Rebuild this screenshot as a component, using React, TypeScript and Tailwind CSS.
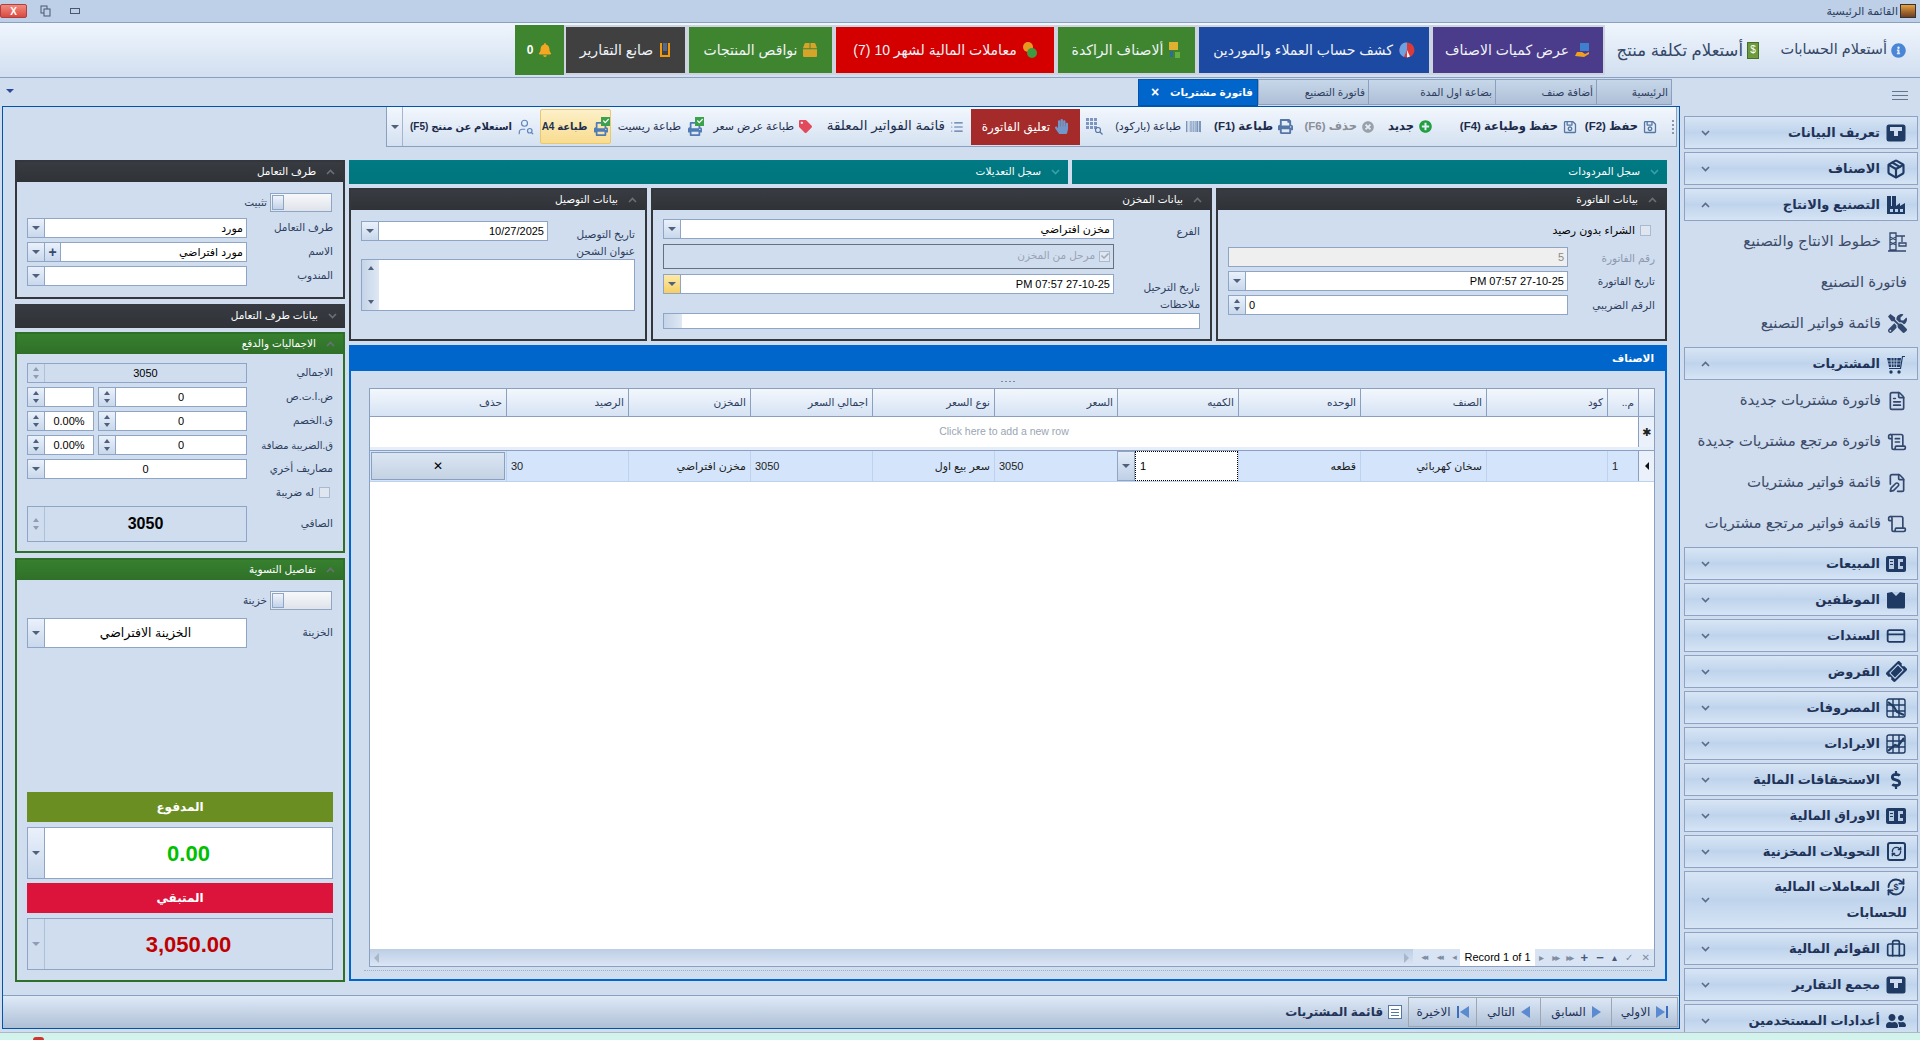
import React from 'react';
import {
  FaBell, FaBox, FaDollarSign, FaHandPaper, FaInfoCircle, FaPlusCircle, FaPrint,
  FaRegSave, FaTag, FaTimesCircle, FaTools, FaUserFriends, FaTicketAlt, FaBarcode, FaCheck,
} from 'react-icons/fa';
import { Package, CreditCard, FileText, ScrollText, Scroll, FileEdit, Briefcase, RefreshCw, UserSearch, List } from 'lucide-react';

function Tri({ up, cls = 'border-t-[#4f5f7c]' }: { up?: boolean; cls?: string }) {
  if (up) return <span className="w-0 h-0 border-x-[3px] border-x-transparent border-b-[4px] border-b-[#4f5f7c]" />;
  return <span className={`w-0 h-0 border-x-[4px] border-x-transparent border-t-[4px] ${cls}`} />;
}

function Chevron({ up, cls = 'text-[#5a6a88]' }: { up?: boolean; cls?: string }) {
  return (
    <svg width="9" height="6" viewBox="0 0 9 6" className={cls}>
      <path d={up ? 'M1 5l3.5-3.5L8 5' : 'M1 1l3.5 3.5L8 1'} fill="none" stroke="currentColor" strokeWidth="1.6" />
    </svg>
  );
}

function SideBtn({ kind, yellow, faded }: { kind: 'down' | 'spin'; yellow?: boolean; faded?: boolean }) {
  const bg = yellow ? 'from-[#fdeaa8] to-[#f5cf63]' : 'from-[#eaf1fb] to-[#c9d8ec]';
  return (
    <div className={`w-[17px] shrink-0 flex flex-col items-center justify-center gap-[4px] border-r border-[#8fa5c6] bg-linear-to-b ${faded ? 'from-[#d0ddee] to-[#d0ddee] opacity-50' : bg}`}>
      {kind === 'down' ? <Tri /> : (<><Tri up /><span className="rotate-180 flex"><Tri up /></span></>)}
    </div>
  );
}

function Field({ value = '', btn, cls, align = 'text-right', text = 'text-[11px] text-black', bg = 'bg-white', yellow, faded, plus }: {
  value?: string; btn?: 'down' | 'spin'; cls: string; align?: string; text?: string; bg?: string; yellow?: boolean; faded?: boolean; plus?: boolean;
}) {
  return (
    <div dir="ltr" className={`flex border border-[#8fa5c6] shrink-0 ${cls}`}>
      {btn && <SideBtn kind={btn} yellow={yellow} faded={faded} />}
      {plus && <div className="w-[16px] shrink-0 flex items-center justify-center border-r border-[#8fa5c6] bg-linear-to-b from-[#eaf1fb] to-[#c9d8ec] text-[14px] font-bold leading-none text-[#344a70]">+</div>}
      <div dir="rtl" className={`flex-1 min-w-0 px-[3px] flex items-center ${bg} ${text}`}>
        <span className={`w-full whitespace-nowrap ${align}`}>{value}</span>
      </div>
    </div>
  );
}

function Label({ children, cls = '', tone = 'text-[#2d3e5e]', size = 'text-[10.5px]' }: { children: React.ReactNode; cls?: string; tone?: string; size?: string }) {
  return <span className={`whitespace-nowrap ${size} ${tone} ${cls}`}>{children}</span>;
}

function Toggle() {
  return (
    <div dir="ltr" className="w-[62px] h-[19px] border border-[#8fa5c6] bg-linear-to-b from-[#f7f8fa] to-[#dfe3ea] p-[1px] flex">
      <div className="w-[12px] h-full border border-[#8fa5c6] bg-linear-to-b from-[#f0f5fc] to-[#c3d2e8]" />
    </div>
  );
}

function Check({ checked }: { checked?: boolean }) {
  return (
    <span className="w-[11px] h-[11px] border border-[#a9b9d0] bg-[#dfe6f0] flex items-center justify-center shrink-0">
      {checked && <FaCheck className="text-[#a0aabb] text-[8px]" />}
    </span>
  );
}

function Group({ title, cls, head, border, up = true, chev = 'text-[#6a7078]', h = 'h-[20px]', children }: {
  title: string; cls: string; head: string; border: string; up?: boolean; chev?: string; h?: string; children?: React.ReactNode;
}) {
  return (
    <div dir="rtl" className={`flex flex-col shrink-0 ${children ? `border-2 ${border}` : ''} ${cls}`}>
      <div className={`${h} shrink-0 flex items-center pr-[8px] gap-[10px] text-white text-[10.5px] ${head}`}>
        <Chevron up={up} cls={chev} />
        <span className="whitespace-nowrap">{title}</span>
      </div>
      {children}
    </div>
  );
}

const DARK = 'bg-linear-to-b from-[#383c42] to-[#2f3338]';
const GREEN = 'bg-linear-to-b from-[#37802f] to-[#2f7029]';
const TEAL = 'bg-linear-to-b from-[#007a84] to-[#00757c]';

/* small drawn icons */
function TBox() {
  return (
    <svg viewBox="0 0 20 18" className="w-[20px] h-[18px]">
      <rect x="0.5" y="0.5" width="19" height="17" rx="2.5" fill="#1f3a63" />
      <path d="M4 3h12v4h-4v5H8V7H4z" fill="#cfdcf0" />
    </svg>
  );
}
function BookS() {
  return (
    <svg viewBox="0 0 20 16" className="w-[20px] h-[16px]">
      <rect width="20" height="16" rx="2" fill="#1f3a63" />
      <path d="M3 3h5v10H3zM12 3h5v3h-3v4h3v3h-5z" fill="#b9cbe4" />
      <rect x="4" y="5" width="3" height="1" fill="#1f3a63" /><rect x="4" y="8" width="3" height="1" fill="#1f3a63" />
    </svg>
  );
}
function Shirt() {
  return (
    <svg viewBox="0 0 20 18" className="w-[20px] h-[18px]">
      <path d="M1 2l5-1 4 4 4-4 5 1v14a1.5 1.5 0 0 1-1.5 1.5h-15A1.5 1.5 0 0 1 1 16z" fill="#1f3a63" />
      <path d="M7 1h6l-3 3z" fill="#b9cbe4" />
    </svg>
  );
}
function Sheet({ up }: { up?: boolean }) {
  return (
    <svg viewBox="0 0 20 20" className="w-[20px] h-[20px]" fill="none" stroke="#1f3a63" strokeWidth="1.4">
      <rect x="1" y="1" width="18" height="18" rx="2" />
      <path d="M1 7h18M1 13h18M7 1v18M13 1v18" />
      <path d={up ? 'M2 17L9 11l3 1 6-8' : 'M2 4l6 5 3 5 7 3'} strokeWidth="2.2" />
    </svg>
  );
}
function SwapBox() {
  return (
    <div className="w-[19px] h-[19px] border-2 border-[#1f3a63] rounded-[3px] flex items-center justify-center">
      <RefreshCw size={11} strokeWidth={3} className="text-[#1f3a63]" />
    </div>
  );
}
function Crane() {
  return (
    <svg viewBox="0 0 20 20" className="w-[20px] h-[20px]" fill="none" stroke="#33486e" strokeWidth="1.3">
      <path d="M3 1h6v17H3zM3 5l6 3M9 5L3 8M3 10l6 3M9 10l-6 3M9 4h9M15 4v6M12 11h7v3h-7zM1 19h18" />
    </svg>
  );
}
function Factory() {
  return (
    <svg viewBox="0 0 20 20" className="w-[20px] h-[20px]">
      <path d="M1 19V1h4v10h1V1h4v10l4-3v3l5-3v11z" fill="#1f3a63" />
      <rect x="4" y="14" width="3" height="3" fill="#bcd1ea" /><rect x="9" y="14" width="3" height="3" fill="#bcd1ea" /><rect x="14" y="14" width="3" height="3" fill="#bcd1ea" />
    </svg>
  );
}
function Cart() {
  return (
    <svg viewBox="0 0 20 20" className="w-[20px] h-[20px]">
      <path d="M1 4h14l-1 9H3z" fill="#1f3a63" />
      <path d="M1 7h14M1.5 10h13M5 4l.5 9M8 4v9M11 4l-.5 9" stroke="#bcd1ea" strokeWidth="0.8" />
      <path d="M14 14H3v1h12l2-12h2V2h-3z" fill="#1f3a63" />
      <circle cx="5" cy="18" r="1.7" fill="#1f3a63" /><circle cx="13" cy="18" r="1.7" fill="#1f3a63" />
    </svg>
  );
}
function Exchange() {
  return (
    <span className="flex items-center justify-center w-[20px] h-[20px] shrink-0 relative">
      <RefreshCw size={20} strokeWidth={2.2} color="#1f3a63" />
      <span className="absolute inset-0 flex items-center justify-center text-[9px] font-bold text-[#1f3a63] leading-none">$</span>
    </span>
  );
}

const side: any[] = [
  { t: 'تعريف البيانات', i: <TBox /> },
  { t: 'الاصناف', i: <Package size={20} strokeWidth={2.6} color="#1f3a63" /> },
  { t: 'التصنيع والانتاج', i: <Factory />, up: true },
  { s: 'خطوط الانتاج والتصنيع', i: <Crane /> },
  { s: 'فاتورة التصنيع' },
  { s: 'قائمة فواتير التصنيع', i: <FaTools size={19} color="#33486e" /> },
  { t: 'المشتريات', i: <Cart />, up: true },
  { s: 'فاتورة مشتريات جديدة', i: <FileText size={20} color="#33486e" /> },
  { s: 'فاتورة مرتجع مشتريات جديدة', i: <ScrollText size={20} color="#33486e" /> },
  { s: 'قائمة فواتير مشتريات', i: <FileEdit size={20} color="#33486e" /> },
  { s: 'قائمة فواتير مرتجع مشتريات', i: <Scroll size={20} color="#33486e" /> },
  { t: 'المبيعات', i: <BookS /> },
  { t: 'الموظفين', i: <Shirt /> },
  { t: 'السندات', i: <CreditCard size={20} strokeWidth={2.2} color="#1f3a63" /> },
  { t: 'القروض', i: <FaTicketAlt size={19} color="#1f3a63" className="-rotate-45" /> },
  { t: 'المصروفات', i: <Sheet /> },
  { t: 'الايرادات', i: <Sheet up /> },
  { t: 'الاستحقاقات المالية', i: <FaDollarSign size={18} color="#1f3a63" /> },
  { t: 'الاوراق المالية', i: <BookS /> },
  { t: 'التحويلات المخزنية', i: <SwapBox /> },
  { t: 'المعاملات المالية', t2: 'للحسابات', i: <Exchange />, tall: true },
  { t: 'القوائم المالية', i: <Briefcase size={20} strokeWidth={2} color="#1f3a63" /> },
  { t: 'مجمع التقارير', i: <TBox /> },
  { t: 'أعدادات المستخدمين', i: <FaUserFriends size={20} color="#1f3a63" /> },
];

function Sidebar() {
  return (
    <div className="w-[240px] shrink-0 pl-[4px] pr-[2px] flex flex-col">
      <div className="h-[35px] shrink-0 flex justify-end items-center pr-[10px]">
        <div className="w-[16px] flex flex-col gap-[3px]">
          <div className="h-[1px] bg-[#66758e]" /><div className="h-[1px] bg-[#66758e]" /><div className="h-[1px] bg-[#66758e]" />
        </div>
      </div>
      {side.map((it, n) =>
        it.s ? (
          <div key={n} dir="rtl" className="h-[41px] shrink-0 flex items-center gap-[6px] pr-[11px] text-[15px] text-[#3c4c6a]">
            {it.i && <span className="w-[20px] flex justify-center">{it.i}</span>}
            <span className="whitespace-nowrap">{it.s}</span>
          </div>
        ) : it.tall ? (
          <div key={n} dir="rtl" className="h-[58px] shrink-0 mt-[3px] flex items-center justify-between border border-[#8ea3c4] bg-linear-to-b from-[#d8e5f5] via-[#bfd4ec] to-[#d6e4f5] pr-[10px] pl-[16px]">
            <div className="text-[13px] font-bold text-[#1f3358] leading-[26px]">
              <div className="flex items-center gap-[6px] pr-[1px]">{it.i}<span className="whitespace-nowrap">{it.t}</span></div>
              <div>{it.t2}</div>
            </div>
            <span className="shrink-0"><Chevron /></span>
          </div>
        ) : (
          <div key={n} dir="rtl" className="h-[33px] items-center shrink-0 mt-[3px] flex justify-between border border-[#8ea3c4] bg-linear-to-b from-[#d8e5f5] via-[#bfd4ec] to-[#d6e4f5] pr-[11px] pl-[16px]">
            <div className="flex items-center gap-[6px] min-w-0">
              <span className="w-[20px] flex justify-center shrink-0">{it.i}</span>
              <span className="text-[13px] font-bold text-[#1f3358] whitespace-nowrap">{it.t}</span>
            </div>
            <span className="shrink-0"><Chevron up={it.up} /></span>
          </div>
        ),
      )}
    </div>
  );
}

function TopBtn({ cls, icon, children }: { cls: string; icon: React.ReactNode; children: string }) {
  return (
    <div className={`h-[50px] shrink-0 flex items-center justify-center gap-[6px] text-[14px] text-[#f1f4f8] whitespace-nowrap ${cls}`}>
      {icon}<span>{children}</span>
    </div>
  );
}

const FRAME = 'border-2 border-[#cdd4df]';

function TopBar() {
  return (
    <div dir="rtl" className="h-[56px] shrink-0 flex items-center pr-[14px] border-y border-[#8ba0bf] bg-linear-to-b from-[#eff5fd] to-[#d2dff0]">
      <div className="w-[126px] shrink-0 flex items-center gap-[4px] text-[14.5px] text-[#334766] whitespace-nowrap">
        <FaInfoCircle size={15} color="#4a86d8" className="shrink-0" /><span>أستعلام الحسابات</span>
      </div>
      <div className="w-[144px] shrink-0 mr-[21px] flex items-center gap-[4px] text-[16.5px] text-[#334766] whitespace-nowrap">
        <span className="w-[12px] h-[17px] shrink-0 bg-[#6f9a3c] border border-[#44702a] text-white text-[10px] leading-none flex items-center justify-center">$</span><span>أستعلام تكلفة منتج</span>
      </div>
      <TopBtn cls={`w-[174px] mr-[10px] bg-[#4a3b8b] ${FRAME}`} icon={<svg width="16" height="16" viewBox="0 0 16 16"><rect x="5" y="1" width="9" height="8" fill="#3f7fd0" /><path d="M0 14l2-4h5l3 2 4-2v2l-5 3z" fill="#f0a020" /></svg>}>عرض كميات الاصناف</TopBtn>
      <TopBtn cls={`w-[234px] bg-[#1c49a2] ${FRAME}`} icon={<svg width="16" height="18" viewBox="0 0 16 18"><circle cx="8" cy="9" r="7.5" fill="#d93a3a" /><path d="M8 9V1.5a7.5 7.5 0 0 0-3 14.4z" fill="#6fa0e0" /><path d="M8 9l3 6.5-3 1z" fill="#f4f4f4" /></svg>}>كشف حساب العملاء والموردين</TopBtn>
      <TopBtn cls={`w-[141px] bg-[#3f8530] ${FRAME}`} icon={<svg width="12" height="18" viewBox="0 0 12 18"><rect y="1" width="9" height="8" fill="#e0b030" /><rect x="1" y="10" width="3" height="6" fill="#2f6a9a" /><rect x="6" y="11" width="5" height="6" fill="#65b040" /></svg>}>ألاصناف الراكدة</TopBtn>
      <TopBtn cls={`w-[222px] bg-[#d40000] ${FRAME}`} icon={<svg width="14" height="18" viewBox="0 0 14 18"><circle cx="5" cy="6" r="5" fill="#e69a20" /><circle cx="9" cy="12" r="5" fill="#3f9a40" /></svg>}>معاملات المالية لشهر 10 (7)</TopBtn>
      <TopBtn cls={`w-[147px] bg-[#3f8530] ${FRAME}`} icon={<FaBox size={14} color="#d6a429" />}>نواقص المنتجات</TopBtn>
      <TopBtn cls={`w-[123px] bg-[#404040] ${FRAME}`} icon={<svg width="12" height="16" viewBox="0 0 12 16" fill="none" stroke="#f09a10" strokeWidth="2"><path d="M2 1v13h8V1" /><rect x="4" y="1" width="4" height="8" fill="#54668a" stroke="none" /></svg>}>صانع التقارير</TopBtn>
      <div className="w-[49px] h-[50px] shrink-0 bg-[#3f8530] flex items-center justify-center gap-[5px] text-white text-[12px] font-bold">
        <FaBell size={14} color="#f5a623" /><span>0</span>
      </div>
    </div>
  );
}

function Tab({ w, children }: { w: string; children: string }) {
  return (
    <div className={`${w} shrink-0 h-[26px] flex items-start pt-[5px] pr-[3px] border border-r-0 first:border-r border-[#8ba0bf] bg-linear-to-b from-[#c7d7ea] to-[#aebfd6] text-[10.5px] text-[#2d3e5e] whitespace-nowrap`}>
      {children}
    </div>
  );
}

function Tabs() {
  return (
    <div className="h-[28px] shrink-0 flex items-end justify-between pl-[4px] pr-[8px]">
      <span className="flex mb-[13px]"><Tri cls="border-t-[#2a4aa0]" /></span>
      <div dir="rtl" className="flex">
        <Tab w="w-[76px]">الرئيسية</Tab>
        <Tab w="w-[101px]">أضافة صنف</Tab>
        <Tab w="w-[127px]">بضاعة اول المدة</Tab>
        <Tab w="w-[110px]">فاتورة التصنيع</Tab>
        <div className="w-[120px] h-[27px] shrink-0 flex items-center justify-between pr-[4px] pl-[12px] bg-[#0066cc] border border-[#0055aa] text-white text-[10.5px] font-bold whitespace-nowrap">
          <span>فاتورة مشتريات</span><span className="text-[14px]">×</span>
        </div>
      </div>
    </div>
  );
}

function PrintCheck() {
  return (
    <span className="relative w-[17px] h-[18px] shrink-0 flex items-end justify-center">
      <FaPrint size={14} color="#4f7cb5" />
      <span className="absolute -top-[1px] -right-[1px] w-[9px] h-[9px] bg-[#3da04a] flex items-center justify-center"><FaCheck className="text-white text-[6px]" /></span>
    </span>
  );
}

function GridSearch() {
  return (
    <svg width="17" height="17" viewBox="0 0 17 17" fill="#7c96c0">
      {[0, 4, 8].map(y => [0, 4, 8].map(x => <rect key={`${x}${y}`} x={x} y={y} width="3" height="3" />))}
      <circle cx="12" cy="12" r="2.5" fill="none" stroke="#5577a5" strokeWidth="1.2" /><path d="M14 14l2.5 2.5" stroke="#5577a5" strokeWidth="1.3" />
    </svg>
  );
}

function Toolbar() {
  const T = 'whitespace-nowrap flex items-center gap-[5px] shrink-0 [&>svg]:shrink-0';
  const B = `${T} text-[11.5px] text-[#1c2b4a] font-bold`;
  const L = `${T} text-[11px] text-[#22304e]`;
  return (
    <div className="h-[41px] shrink-0 flex justify-end pr-[2px]">
      <div dir="rtl" className="w-[1291px] h-[40px] flex items-center border-b border-l border-r border-[#8ba0bf] bg-linear-to-b from-[#f3f7fd] to-[#d4e1f1]">
        <span className="w-[4px] mr-[2px] shrink-0 flex flex-col gap-[2px]">
          {[0, 1, 2, 3].map(i => <span key={i} className="w-[2px] h-[2px] bg-[#8797b0]" />)}
        </span>
        <div className={`${B} w-[70px] mr-[13px]`}><FaRegSave size={14} color="#5577a5" /><span>حفظ (F2)</span></div>
        <div className={`${B} w-[119px] mr-[10px]`}><FaRegSave size={14} color="#5577a5" /><span>حفظ وطباعة (F4)</span></div>
        <div className={`${B} w-[46px] mr-[26px]`}><FaPlusCircle size={13} color="#22a040" /><span>جديد</span></div>
        <div className={`${T} text-[11.5px] font-bold text-[#8b8f98] w-[71px] mr-[12px]`}><FaTimesCircle size={12} color="#9aa0aa" /><span>حذف (F6)</span></div>
        <div className={`${B} w-[83px] mr-[10px]`}><FaPrint size={15} color="#5577a5" /><span>طباعة (F1)</span></div>
        <div className={`${L} w-[89px] mr-[9px]`}><FaBarcode size={15} color="#5577a5" /><span>طباعة (باركود)</span></div>
        <div className="w-[17px] mr-[9px] shrink-0"><GridSearch /></div>
        <div className="w-[109px] h-[36px] mr-[6px] shrink-0 flex items-center justify-center gap-[4px] bg-[#a52a2a] text-white text-[12px] whitespace-nowrap">
          <FaHandPaper size={15} color="#7396c8" /><span>تعليق الفاتورة</span>
        </div>
        <div className={`${T} text-[13.5px] text-[#22304e] w-[141px] mr-[7px]`}><List size={14} color="#5577a5" /><span>قائمة الفواتير المعلقة</span></div>
        <div className={`${L} w-[98px] mr-[11px]`}><FaTag size={13} color="#e24a5c" /><span>طباعة عرض سعر</span></div>
        <div className={`${L} w-[84px] mr-[11px]`}><PrintCheck /><span>طباعة ريسيت</span></div>
        <div className={`${T} text-[10px] text-[#22304e] w-[71px] h-[35px] mr-[8px] justify-center border border-[#e8c870] rounded-[2px] bg-linear-to-b from-[#fdf0c8] to-[#f8dc8f] font-bold`}><PrintCheck /><span>طباعة A4</span></div>
        <div className={`${T} text-[10px] font-bold text-[#1c2b4a] w-[126px] mr-[5px]`}><UserSearch size={18} color="#5f86bd" strokeWidth={1.6} /><span>استعلام عن منتج (F5)</span></div>
        <div className="ms-auto w-[16px] h-full border-r border-[#a5b5cc] flex items-center justify-center shrink-0"><Tri /></div>
      </div>
    </div>
  );
}

function LeftColumn() {
  const row = 'flex items-center justify-between';
  return (
    <div className="w-[330px] shrink-0 pt-[12px] flex flex-col">
      <Group title="طرف التعامل" cls="w-full h-[139px]" head={DARK} border="border-[#33373c]">
        <div className="px-[10px] flex flex-col flex-1">
          <div className="flex items-center gap-[3px] pr-[1px] mt-[11px]">
            <Toggle /><Label>تثبيت</Label>
          </div>
          <div className={`${row} mt-[6px]`}><Label>طرف التعامل</Label><Field btn="down" cls="w-[220px] h-[20px]" value="مورد" /></div>
          <div className={`${row} mt-[4px]`}><Label>الاسم</Label><Field btn="down" plus cls="w-[220px] h-[20px]" value="مورد افتراضي" /></div>
          <div className={`${row} mt-[4px]`}><Label>المندوب</Label><Field btn="down" cls="w-[220px] h-[20px]" /></div>
        </div>
      </Group>
      <Group title="بيانات طرف التعامل" cls="w-full mt-[5px]" head={DARK} border="" up={false} h="h-[24px]" />
      <Group title="الاجماليات والدفع" cls="w-full h-[221px] mt-[4px]" head={GREEN} border="border-[#2f7029]">
        <div className="px-[10px] flex flex-col">
          <div className={`${row} mt-[9px]`}><Label>الاجمالي</Label><Field btn="spin" faded cls="w-[220px] h-[20px]" value="3050" align="text-center" bg="bg-[#d0ddee]" /></div>
          <div className={`${row} mt-[4px]`}>
            <Label>ض.ا.ت.ص</Label>
            <div dir="ltr" className="flex gap-[4px]"><Field btn="spin" cls="w-[67px] h-[20px]" /><Field btn="spin" cls="w-[149px] h-[20px]" value="0" align="text-center" /></div>
          </div>
          <div className={`${row} mt-[4px]`}>
            <Label>ق.الخصم</Label>
            <div dir="ltr" className="flex gap-[4px]"><Field btn="spin" cls="w-[67px] h-[20px]" value="0.00%" align="text-center" /><Field btn="spin" cls="w-[149px] h-[20px]" value="0" align="text-center" /></div>
          </div>
          <div className={`${row} mt-[4px]`}>
            <Label size="text-[10px]">ق.الضريبة مضافة</Label>
            <div dir="ltr" className="flex gap-[4px]"><Field btn="spin" cls="w-[67px] h-[20px]" value="0.00%" align="text-center" /><Field btn="spin" cls="w-[149px] h-[20px]" value="0" align="text-center" /></div>
          </div>
          <div className={`${row} mt-[4px]`}><Label>مصاريف أخري</Label><Field btn="down" cls="w-[220px] h-[20px]" value="0" align="text-center" /></div>
          <div className="flex items-center gap-[5px] pr-[3px] mt-[7px] h-[13px]"><Check /><Label>له ضريبة</Label></div>
          <div className={`${row} mt-[7px]`}><Label>الصافي</Label><Field btn="spin" faded cls="w-[220px] h-[36px]" value="3050" align="text-center" text="text-[16px] font-bold text-black" bg="bg-[#d0ddee]" /></div>
        </div>
      </Group>
      <Group title="تفاصيل التسوية" cls="w-full h-[424px] mt-[5px]" head={GREEN} border="border-[#2f7029]">
        <div className="px-[10px] flex flex-col">
          <div className="flex items-center gap-[3px] pr-[1px] mt-[11px]"><Toggle /><Label>خزينة</Label></div>
          <div className={`${row} mt-[8px]`}>
            <Label>الخزينة</Label>
            <Field btn="down" cls="w-[220px] h-[30px]" value="الخزينة الافتراضي" align="text-center" text="text-[12.5px] text-black" />
          </div>
          <div className="h-[30px] mt-[144px] bg-[#6b8e23] text-white text-[12px] font-bold flex items-center justify-center">المدفوع</div>
          <Field btn="down" cls="w-full h-[52px] mt-[5px]" value="0.00" align="text-center" text="text-[22px] font-bold text-[#00c000]" />
          <div className="h-[30px] mt-[4px] bg-[#dc143c] text-white text-[12px] font-bold flex items-center justify-center">المتبقي</div>
          <Field btn="down" faded cls="w-full h-[52px] mt-[5px]" value="3,050.00" align="text-center" text="text-[22px] font-bold text-[#c00000]" bg="bg-[#d0ddee]" />
        </div>
      </Group>
    </div>
  );
}

function InfoGroups() {
  return (
    <div className="flex gap-[4px] mt-[4px]">
      <Group title="بيانات التوصيل" cls="w-[298px] h-[153px]" head={DARK} border="border-[#33373c]">
        <div className="px-[10px] flex flex-col">
          <div className="flex items-center justify-between mt-[9px]">
            <Label cls="mt-[8px]">تاريخ التوصيل</Label>
            <Field btn="down" cls="w-[187px] h-[20px]" value="10/27/2025" />
          </div>
          <Label cls="mt-[1px] h-[15px]">عنوان الشحن</Label>
          <div dir="ltr" className="h-[52px] flex border border-[#8fa5c6] bg-white">
            <div className="w-[17px] flex flex-col justify-between items-center py-[6px] bg-linear-to-r from-[#c5d4e8] to-[#dfe8f4]"><Tri up /><span className="rotate-180 flex"><Tri up /></span></div>
          </div>
        </div>
      </Group>
      <Group title="بيانات المخزن" cls="w-[561px] h-[153px]" head={DARK} border="border-[#33373c]">
        <div className="px-[10px] flex flex-col">
          <div className="flex justify-between mt-[9px]">
            <Label cls="mt-[5px]">الفرع</Label>
            <Field btn="down" cls="w-[451px] h-[20px]" value="مخزن افتراضي" />
          </div>
          <div className="mr-[86px] h-[25px] mt-[4px] border border-[#66707e] flex items-center gap-[4px] pr-[3px]">
            <Check checked /><span className="text-[10.5px] text-[#9aa3b2]">مرحل من المخزن</span>
          </div>
          <div className="flex justify-between mt-[5px]">
            <Label cls="mt-[6px]">تاريخ الترحيل</Label>
            <Field btn="down" yellow cls="w-[451px] h-[20px]" value="27-10-25 07:57 PM" />
          </div>
          <Label cls="mt-[1px] h-[16px]">ملاحظات</Label>
          <div dir="ltr" className="h-[16px] flex border border-[#8fa5c6] bg-white">
            <div className="w-[18px] bg-linear-to-r from-[#c5d4e8] to-[#dfe8f4]" />
          </div>
        </div>
      </Group>
      <Group title="بيانات الفاتورة" cls="w-[451px] h-[153px]" head={DARK} border="border-[#33373c]">
        <div className="px-[10px] flex flex-col">
          <div className="flex items-center gap-[5px] pr-[4px] mt-[13px] h-[14px]"><Check /><span className="text-[11px] text-black">الشراء بدون رصيد</span></div>
          <div className="flex justify-between mt-[10px]">
            <Label cls="mt-[4px]" tone="text-[#8b98ae]">رقم الفاتورة</Label>
            <Field cls="w-[340px] h-[20px]" value="5" bg="bg-[#efefef]" text="text-[11px] text-[#8a8a8a]" />
          </div>
          <div className="flex justify-between mt-[4px]">
            <Label cls="mt-[3px]">تاريخ الفاتورة</Label>
            <Field btn="down" cls="w-[340px] h-[20px]" value="27-10-25 07:57 PM" />
          </div>
          <div className="flex justify-between mt-[4px]">
            <Label cls="mt-[3px]">الرقم الضريبي</Label>
            <Field btn="spin" cls="w-[340px] h-[20px]" value="0" align="text-left" />
          </div>
        </div>
      </Group>
    </div>
  );
}

const COLS = 'grid grid-cols-[16px_31px_121px_126px_122px_121px_123px_122px_122px_122px_122px_136px]';

function Grid() {
  const heads = ['م..', 'كود', 'الصنف', 'الوحده', 'الكميه', 'السعر', 'نوع السعر', 'اجمالي السعر', 'المخزن', 'الرصيد', 'حذف'];
  const cell = 'border-l border-[#bdd2ee] flex items-center px-[4px] text-[11px] text-[#1d1d1d] whitespace-nowrap';
  const num = `${cell} justify-end`;
  return (
    <div className="ml-[18px] mr-[10px] flex flex-col h-[579px] border border-[#8ba0bf] bg-white">
      <div dir="rtl" className={`${COLS} h-[28px] shrink-0 border-b border-[#8ba0bf] bg-linear-to-b from-[#f3f7fd] to-[#d6e3f4]`}>
        <div className="border-l border-[#8ba0bf]" />
        {heads.map(h => <div key={h} className="border-l last:border-l-0 border-[#8ba0bf] flex items-center px-[4px] text-[10.5px] text-[#2d3e5e] whitespace-nowrap">{h}</div>)}
      </div>
      <div dir="rtl" className="h-[30px] shrink-0 flex bg-white">
        <div className="w-[16px] shrink-0 border-l border-[#8ba0bf] bg-[#eaf1fb] flex items-center justify-center text-[11px] font-bold text-[#222]">✱</div>
        <div dir="ltr" className="flex-1 flex items-center justify-center text-[10.5px] text-[#9aa5b4]">Click here to add a new row</div>
      </div>
      <div className="h-[4px] shrink-0 bg-[#e6eef9] border-b border-[#8ba0bf]" />
      <div dir="rtl" className={`${COLS} h-[31px] shrink-0 border-b border-[#bdd2ee] bg-[#d4e5fb]`}>
        <div className="border-l border-[#8ba0bf] bg-[#eaf1fb] flex items-center justify-center"><span className="w-0 h-0 border-y-[4px] border-y-transparent border-r-[4px] border-r-[#111]" /></div>
        <div className={num}>1</div>
        <div className={cell} />
        <div className={cell}>سخان كهربائي</div>
        <div className={cell}>قطعه</div>
        <div dir="ltr" className="flex">
          <div className="w-[18px] flex items-center justify-center border border-[#8fa5c6] bg-linear-to-b from-[#e3ecf8] to-[#bfd0e6]"><Tri /></div>
          <div className="flex-1 bg-white border border-dotted border-black flex items-center px-[4px] text-[11px]">1</div>
        </div>
        <div className={num}>3050</div>
        <div className={cell}>سعر بيع اول</div>
        <div className={num}>3050</div>
        <div className={cell}>مخزن افتراضي</div>
        <div className={num}>30</div>
        <div className="p-[1px]"><div className="h-full border border-[#8ba0bf] bg-linear-to-b from-[#dbe6f3] to-[#c4d2e3] flex items-center justify-center text-[12px] font-bold text-black">✕</div></div>
      </div>
      <div className="flex-1" />
      <div className="h-[17px] shrink-0 flex items-center bg-linear-to-b from-[#bccde4] to-[#dbe6f5]">
        <div className="w-[1043px] flex justify-between items-center px-[4px]">
          <span className="w-0 h-0 border-y-[5px] border-y-transparent border-r-[5px] border-r-[#a8b6ca]" />
          <span className="w-0 h-0 border-y-[5px] border-y-transparent border-l-[5px] border-l-[#a8b6ca]" />
        </div>
        <div className="flex-1 h-full bg-[#d8e4f4] flex items-center text-[#7f8da3]">
          <div className="w-[47px] flex justify-around pl-[3px] text-[9px] tracking-[-2px]"><span>◂◂</span><span>◂◂</span><span>◂</span></div>
          <div className="w-[75px] h-full bg-white flex items-center justify-center text-[11px] text-black whitespace-nowrap">Record 1 of 1</div>
          <div className="flex-1 flex justify-around items-center text-[10px]">
            <span>▸</span><span className="tracking-[-2px]">▸▸</span><span className="tracking-[-2px]">▸▸</span>
            <span className="text-[#465a7c] font-bold text-[13px]">+</span><span className="text-[#465a7c] font-bold text-[13px]">−</span>
            <span className="text-[#465a7c]">▴</span><span>✓</span><span className="font-bold">✕</span>
          </div>
        </div>
      </div>
    </div>
  );
}

function Center() {
  return (
    <div className="w-[1318px] shrink-0 ml-[4px] pt-[12px] flex flex-col">
      <div className="flex gap-[4px]">
        <Group title="سجل التعديلات" cls="w-[719px]" head={TEAL} border="" up={false} chev="text-[#3aa0a8]" h="h-[24px]" />
        <Group title="سجل المردودات" cls="w-[595px]" head={TEAL} border="" up={false} chev="text-[#3aa0a8]" h="h-[24px]" />
      </div>
      <InfoGroups />
      <div className="h-[636px] mt-[4px] border-2 border-[#0066cc] flex flex-col">
        <div dir="rtl" className="h-[24px] shrink-0 flex items-center pr-[11px] bg-[#0066cc] text-white text-[10.5px] font-bold">الاصناف</div>
        <div className="h-[17px] shrink-0 flex justify-center items-end pb-[6px] gap-[2px]">
          {[0, 1, 2, 3].map(i => <span key={i} className="w-[2px] h-[1px] bg-[#7a8aa3]" />)}
        </div>
        <Grid />
        <div className="mx-[13px] mt-[3px] border-t border-dotted border-[#9fb0c8]" />
      </div>
    </div>
  );
}

function NavBtn({ w, icon, children }: { w: string; icon: React.ReactNode; children: string }) {
  return (
    <div className={`${w} h-[30px] shrink-0 flex items-center justify-center gap-[6px] border-l border-[#a0a6b0] text-[12px] text-[#1f3358] whitespace-nowrap`}>
      {icon}<span>{children}</span>
    </div>
  );
}

function Arrow({ dir, bar }: { dir: 'l' | 'r'; bar?: boolean }) {
  return (
    <span dir="ltr" className="flex items-center gap-[1px]">
      {bar && dir === 'l' && <span className="w-[2px] h-[12px] bg-[#3a6fc0]" />}
      <span className={`w-0 h-0 border-y-[6px] border-y-transparent ${dir === 'r' ? 'border-l-[9px] border-l-[#5a8ad0]' : 'border-r-[9px] border-r-[#5a8ad0]'}`} />
      {bar && dir === 'r' && <span className="w-[2px] h-[12px] bg-[#3a6fc0]" />}
    </span>
  );
}

function BottomBar() {
  return (
    <div dir="rtl" className="h-[33px] mt-[13px] shrink-0 flex items-center border-t border-[#8ba0bf] bg-linear-to-b from-[#dfeaf8] to-[#aebfd6]">
      <div className="flex items-center h-[30px] mr-[1px] border-y border-r border-[#a0a6b0]">
        <NavBtn w="w-[66px]" icon={<Arrow dir="r" bar />}>الاولي</NavBtn>
        <NavBtn w="w-[71px]" icon={<Arrow dir="r" />}>السابق</NavBtn>
        <NavBtn w="w-[64px]" icon={<Arrow dir="l" />}>التالي</NavBtn>
        <NavBtn w="w-[68px]" icon={<Arrow dir="l" bar />}>الاخيرة</NavBtn>
      </div>
      <div className="flex items-center gap-[5px] mr-[6px] text-[12px] font-bold text-[#1f3358] whitespace-nowrap">
        <span className="w-[14px] h-[14px] border border-[#5577a5] bg-white flex flex-col justify-center gap-[2px] px-[2px]">
          <span className="h-[1px] bg-[#5577a5]" /><span className="h-[1px] bg-[#5577a5]" /><span className="h-[1px] bg-[#5577a5]" />
        </span>
        <span>قائمة المشتريات</span>
      </div>
    </div>
  );
}

export default function App() {
  return (
    <div className="w-[1920px] h-[1040px] overflow-hidden flex flex-col bg-[#d0ddee] font-['Liberation_Sans','DejaVu_Sans',sans-serif]">
      <div className="h-[22px] shrink-0 flex items-center justify-between bg-[#bdd0e8] pr-[4px]">
        <div className="flex items-center">
          <div className="w-[27px] h-[14px] rounded-[2px] border border-[#b04040] bg-linear-to-b from-[#f08a80] to-[#d84a40] text-white text-[10px] font-bold flex items-center justify-center">X</div>
          <svg width="12" height="12" viewBox="0 0 12 12" className="ml-[13px]" fill="none" stroke="#4a5670"><rect x="1" y="1" width="6" height="7" /><rect x="4" y="4" width="6" height="7" fill="#bdd0e8" /></svg>
          <div className="ml-[18px] w-[10px] h-[6px] border border-[#4a5670]" />
        </div>
        <div dir="rtl" className="flex items-center gap-[2px] text-[11px] text-[#2d3e5e]">
          <span className="w-[16px] h-[14px] bg-linear-to-b from-[#e8a040] to-[#704020] border border-[#333]" />
          <span>القائمة الرئيسية</span>
        </div>
      </div>
      <TopBar />
      <div className="flex-1 min-h-0 flex">
        <div className="w-[1680px] shrink-0 pl-[2px] flex flex-col">
          <Tabs />
          <div className="h-[923px] shrink-0 border border-[#0055aa] flex flex-col">
            <Toolbar />
            <div className="flex-1 min-h-0 flex pl-[12px]">
              <LeftColumn />
              <Center />
            </div>
            <BottomBar />
          </div>
        </div>
        <Sidebar />
      </div>
      <div className="h-[8px] shrink-0 border-t border-[#aeb8c4] bg-[#d2f2ec] flex items-end pl-[33px]">
        <span className="w-[11px] h-[3px] rounded-t-full bg-[#d0342c]" />
      </div>
    </div>
  );
}
